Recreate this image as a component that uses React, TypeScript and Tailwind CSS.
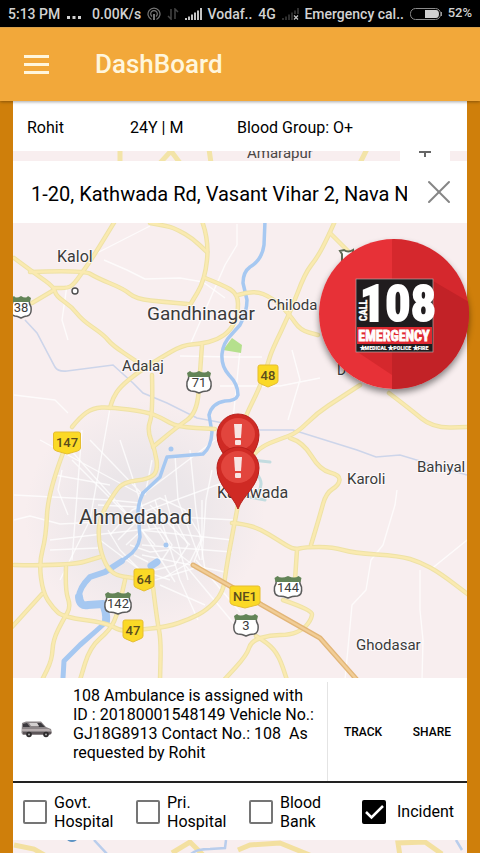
import { X } from 'lucide-react'

/**
 * Ambulance dashboard: patient summary, location map and assignment card.
 */

const FONT = "font-['Roboto','Liberation_Sans',sans-serif]"

const roads = [
  '115,221 95,254 84,270 74,284 68,288 54,288',
  '14,258 37,275 54,287 56,296 72,307 82,320 104,335 112,345 136,361',
  '30,272 84,270 97,278 124,289 136,299 165,302 188,304',
  '54,290 32,303',
  '150,223 168,226 178,230 192,238 207,252',
  '202,221 209,240 205,280 190,305',
  '205,278 223,285 238,294 238,314 231,330 217,340 200,344 183,345 160,358 137,373 120,387 113,398 110,408',
  '202,345 200,373 197,413 177,427 153,447',
  '72,427 80,417 93,408 110,407 147,412 162,418 177,427 215,429',
  '152,375 153,413 147,430 155,450 158,470 150,479 123,482 113,495 100,517 98,537 103,560 113,575 133,578',
  '63,453 48,493 46,537 39,563 43,593 53,608 63,617 107,623 120,631 135,630 167,627 190,619 207,610 223,593 226,570 230,547 238,505',
  '14,565 70,566 100,557',
  '66,567 65,590 71,607 63,620 53,640 52,660 42,680',
  '42,594 12,627',
  '125,580 122,593 118,613 110,630 90,647 80,680',
  '153,587 157,620 161,640 160,680',
  '335,221 328,237 317,258 305,273 290,313 272,350 268,363 260,387 245,417 238,440',
  '330,233 350,253',
  '238,295 253,290 273,298 290,315 300,330 318,335',
  '360,385 340,398 317,413 297,433 280,439 260,447 245,465',
  '389,393 410,409 433,428 470,427',
  '290,438 303,442 320,470 340,475 339,485 326,493 320,515 311,545',
  '232,523 244,524 260,529 278,540 294,550 305,547 333,547 353,553 400,556 420,562 440,573 470,596',
  '297,550 295,580',
  '283,600 312,610 312,618 304,629 290,635 270,635 251,641 247,655 224,680',
  '256,636 268,643 279,656 287,680',
]

const streets = [
  'M97 253L150 226M104 260L127 270L145 279L180 278L203 282L225 298',
  'M14 395L55 400L68 413M180 356L232 357L262 357M110 408L90 520L60 580',
  'M67 285L62 320L68 340M237 224L237 245L225 265L190 345',
  'M397 490L395 505L383 545L371 560L366 590L352 605L345 680',
  'M420 570L420 610L423 640L422 680M467 540L430 570',
  'M240 350L232 430M220 386L280 386L320 378M288 420L300 380L292 350',
  'M40 440L140 494M60 438L155 545M90 440L142 494M120 440L150 530M14 495L110 500L140 503',
  'M14 520L30 516L60 524L98 522M50 540L138 530M50 550L98 548M72 460L132 520M82 430L72 560',
  'M142 495L215 440M140 513L236 478M140 515L235 520M140 530L232 540M142 545L232 552M142 555L225 572',
  'M145 495L152 460M155 500L180 580L198 620M165 495L188 580M175 455L178 500L200 560M190 450L196 510L205 570',
  'M110 535L132 510L160 498L185 510L202 538L190 562L165 577M118 540L136 522L160 512L178 525L188 545L175 565L155 570',
  'M126 545L142 530L160 528L172 545L162 560M100 540L140 570L170 580M108 530L120 550L150 580',
  'M145 510L167 545L193 565M150 505L190 545M142 530L175 582M185 565L235 625M196 560L240 612M155 580L195 568',
  'M202 500L202 540L194 562M212 470L206 500L202 560M55 475L110 485M98 505L138 507',
  'M130 545L150 552L168 550M134 555L148 562M160 585L205 605M62 470L58 490L68 515',
]

const places = [
  { name: 'Kalol', x: 57, y: 262, size: 16 },
  { name: 'Gandhinagar', x: 147, y: 320, size: 19 },
  { name: 'Chiloda', x: 267, y: 310, size: 15 },
  { name: 'Adalaj', x: 122, y: 371, size: 15 },
  { name: 'D', x: 337, y: 375, size: 14 },
  { name: 'Bahiyal', x: 417, y: 472, size: 15 },
  { name: 'Karoli', x: 347, y: 484, size: 15 },
  { name: 'Kathwada', x: 217, y: 498, size: 16 },
  { name: 'Ahmedabad', x: 79, y: 524, size: 21 },
  { name: 'Ghodasar', x: 356, y: 650, size: 15 },
]

const yellowShields = [
  { label: '48', x: 268, y: 375, w: 20 },
  { label: '147', x: 67, y: 442, w: 27 },
  { label: '64', x: 144, y: 579, w: 20 },
  { label: '47', x: 133, y: 630, w: 20 },
  { label: 'NE1', x: 245, y: 596, w: 30 },
]

const whiteShields = [
  { label: '38', x: 21, y: 307, w: 20 },
  { label: '71', x: 199, y: 382, w: 24 },
  { label: '142', x: 118, y: 603, w: 26 },
  { label: '144', x: 288, y: 587, w: 27 },
  { label: '3', x: 246, y: 625, w: 24 },
]

const layers = [
  { id: 'govt', label: 'Govt. Hospital', checked: false },
  { id: 'private', label: 'Pri. Hospital', checked: false },
  { id: 'blood', label: 'Blood Bank', checked: false },
  { id: 'incident', label: 'Incident', checked: true },
]

// Rounds the corners of a polyline by curving through the segment midpoints.
function smooth(points: string) {
  const pts = points.split(' ').map((p) => p.split(',').map(Number))
  let d = `M${pts[0][0]} ${pts[0][1]}`
  for (let i = 1; i < pts.length - 1; i++) {
    const [x, y] = pts[i]
    const [nx, ny] = pts[i + 1]
    d += `Q${x} ${y} ${(x + nx) / 2} ${(y + ny) / 2}`
  }
  const last = pts[pts.length - 1]
  return `${d}L${last[0]} ${last[1]}`
}

function YellowShield({ label, x, y, w }: { label: string; x: number; y: number; w: number }) {
  const h = w / 2
  return (
    <g transform={`translate(${x} ${y})`}>
      <path
        d={`M${-h + 2} -10H${h - 2}Q${h} -10 ${h} -8V6Q${h} 8 ${h - 3} 9L0 12L${-h + 3} 9Q${-h} 8 ${-h} 6V-8Q${-h} -10 ${-h + 2} -10Z`}
        fill="#fbd926"
        stroke="#e5bd30"
      />
      <text y="5" textAnchor="middle" fontSize="13" fontWeight="500" fill="#5a4c1c">
        {label}
      </text>
    </g>
  )
}

function WhiteShield({ label, x, y, w }: { label: string; x: number; y: number; w: number }) {
  const h = w / 2
  return (
    <g transform={`translate(${x} ${y})`}>
      <path
        d={`M${-h + 2} -8H${h - 2}Q${h - 2} -3 ${h} 0Q${h + 1} 8 ${h - 4} 9Q4 9 0 11Q-4 9 ${-h + 4} 9Q${-h - 1} 8 ${-h} 0Q${-h + 2} -3 ${-h + 2} -8Z`}
        fill="#fff"
        stroke="#5c5c5c"
        strokeWidth="1.5"
      />
      <path
        d={`M${-h + 1} -5L${-h} -9L${-h + 3} -11Q${-h / 2} -8 0 -11Q${h / 2} -8 ${h - 3} -11L${h} -9L${h - 1} -5Z`}
        fill="#638457"
      />
      <text y="5" textAnchor="middle" fontSize="13" fill="#3c3c3c">
        {label}
      </text>
    </g>
  )
}

function Pin({ x, y }: { x: number; y: number }) {
  return (
    <g transform={`translate(${x} ${y})`}>
      <path
        d="M0 41C-5 27 -21 18 -21 0A21 21 0 0 1 21 0C21 18 5 27 0 41Z"
        fill="#cf2a24"
        stroke="#b8201c"
      />
      <ellipse cy="-1" rx="17" ry="16" fill="#e2453d" />
      <path d="M-4 -11H4L3 3H-3Z" fill="#f8e4e2" />
      <rect x="-3" y="5" width="6" height="5" rx="1" fill="#f8e4e2" />
    </g>
  )
}

function CityMap() {
  return (
    <svg
      viewBox="13 223 454 455"
      preserveAspectRatio="xMidYMid slice"
      className="h-0 min-h-[360px] w-full flex-1 bg-[#f8eeef]"
      role="img"
      aria-label="Map of Ahmedabad"
    >
      <defs>
        <radialGradient id="urban">
          <stop offset="0.4" stopColor="#ebe6e9" />
          <stop offset="1" stopColor="#ebe6e9" stopOpacity="0" />
        </radialGradient>
      </defs>
      <ellipse cx="145" cy="515" rx="120" ry="115" fill="url(#urban)" />
      <g fill="none" stroke="#fff" strokeWidth="1.4" strokeOpacity="0.75" strokeLinejoin="round">
        {streets.map((d) => (
          <path key={d} d={d} />
        ))}
      </g>
      <path d="M223 350L232 338L242 345L241 353Z" fill="#b5e08d" />

      <path
        d="M25 320L37 333L55 367Q58 372 67 371L113 365L133 383L143 393L167 403L197 418L260 430H293L357 450L376 457L400 455L467 475"
        fill="none"
        stroke="#cdd5ea"
        strokeWidth="1.6"
      />
      <g fill="none" stroke="#a6c8f1" strokeLinejoin="round" strokeLinecap="round">
        <path
          d="M265 221L264 245Q262 260 250 267Q243 272 243 283L247 300Q247 312 240 325L231 335Q223 343 222 354Q221 366 229 375Q238 384 238 395Q236 401 225 401Q212 403 209 415L212 432Q211 448 203 454L167 457Q163 468 160 477L143 493"
          strokeWidth="3.5"
        />
        <path d="M143 493Q138 503 138 513L140 537Q138 550 127 557L108 571" strokeWidth="3.5" />
        <path d="M122 561L105 572L90 577Q79 588 79 597" strokeWidth="6" />
        <path d="M79 597Q80 607 88 605L103 604Q107 613 106 621" strokeWidth="8" />
        <path d="M106 622L96 631L80 645L64 661L63 678" strokeWidth="5" />
        <path d="M151 566L157 562" strokeWidth="7" />
        <path d="M166 545V545M171 449V449" strokeWidth="5" />
        <path d="M243 459L270 462M244 496L265 500M256 473Q265 483 258 492" stroke="#c3dce0" strokeWidth="3" />
      </g>

      <g fill="none" strokeLinejoin="round" strokeLinecap="round">
        {roads.map((points) => (
          <path key={points} d={smooth(points)} stroke="#eee2a6" strokeWidth="4.500" />
        ))}
        {roads.map((points) => (
          <path key={points} d={smooth(points)} stroke="#faeab0" strokeWidth="2.500" />
        ))}
        <path d="M193 565L237 590L262 605L320 638L358 681" stroke="#e2b577" strokeWidth="5" />
        <path d="M193 565L237 590L262 605L320 638L358 681" stroke="#f1cd96" strokeWidth="2.5" />
      </g>
      <circle cx="75" cy="291" r="3" fill="#fff" stroke="#4e4e4e" strokeWidth="1.4" />
      <path d="M342 262V254L340 251L344 250Q348 253 353 250V262" fill="#fff" stroke="#5e6b55" strokeWidth="2" />

      <g fill="#3b3b3b" stroke="#fff" strokeWidth="2" strokeOpacity="0.7" paintOrder="stroke">
        {places.map((p) => (
          <text key={p.name} x={p.x} y={p.y} fontSize={p.size}>
            {p.name}
          </text>
        ))}
      </g>
      {yellowShields.map((s) => (
        <YellowShield key={s.label} {...s} />
      ))}
      {whiteShields.map((s) => (
        <WhiteShield key={s.label} {...s} />
      ))}
      <Pin x={238} y={435} />
      <Pin x={238} y={468} />
    </svg>
  )
}

function EmergencyButton() {
  return (
    <button
      type="button"
      aria-label="Call 108 emergency"
      className="absolute top-4 -right-0.5 size-[150px] rounded-full shadow-[0_4px_6px_rgba(0,0,0,0.45)]"
    >
      <svg viewBox="0 0 150 150" className="block size-full">
        <defs>
          <clipPath id="disc">
            <circle cx="75" cy="75" r="75" />
          </clipPath>
        </defs>
        <g clipPath="url(#disc)">
          <path d="M0 0H73V150H0Z" fill="#e73137" />
          <path d="M73 0H150V150H73Z" fill="#d5282d" />
          <path d="M114 42L150 63V150H73V75Z" fill="#c22227" />
          <path d="M37 112L73 136V112Z" fill="#d5282d" />
        </g>
        <rect x="37" y="40" width="77" height="73" fill="#201c1e" stroke="#b9a5a6" strokeWidth="0.7" />
        <rect x="38" y="88" width="75" height="17" fill="#df2830" />
        <g fill="#fff" stroke="#fff" fontWeight="700" className="font-['Liberation_Sans_Narrow','Roboto_Condensed','Liberation_Sans',sans-serif]">
          <text x="79" y="82" fontSize="50" strokeWidth="2" textAnchor="middle">
            108
          </text>
          <text transform="translate(48 82) rotate(-90)" fontSize="10" strokeWidth="0.4">
            CALL
          </text>
          <text x="75" y="102" fontSize="14" strokeWidth="0.8" textAnchor="middle">
            EMERGENCY
          </text>
          <text x="75" y="111" fontSize="6" strokeWidth="0.2" textAnchor="middle">
            ★MEDICAL ★POLICE ★FIRE
          </text>
        </g>
      </svg>
    </button>
  )
}

function StatusBar() {
  return (
    <div className="flex h-[27px] items-center justify-between bg-black pr-2 pl-2 text-sm font-medium text-[#d2d2d2]">
      <span>5:13 PM</span>
      <svg viewBox="0 0 16 14" className="h-[14px] w-4" fill="#d2d2d2">
        <path d="M1 9h3v3H1zM6.500 9h3v3h-3zM12 9h3v3h-3z" />
      </svg>
      <span className="ml-1">0.00K/s</span>
      <svg viewBox="0 0 14 14" className="size-[14px]" fill="none" stroke="#777" strokeWidth="1.2">
        <path d="M4.500 12.500A6 6 0 1 1 9.500 12.500M5 9.500A3.300 3.300 0 1 1 9 9.500" />
        <path d="M7 7V13" strokeWidth="2" />
      </svg>
      <svg viewBox="0 0 12 12" className="size-3" fill="none" stroke="#444" strokeWidth="1.5">
        <path d="M4 1V11L1 8M8 11V1L11 4" />
      </svg>
      <svg viewBox="0 0 17 12" className="h-3 w-[17px]" fill="#c4c4c4">
        <path d="M0 10h2v2H0zM3 8.500h2V12H3zM6 6.500h2V12H6zM9 4.500h2V12H9zM12 2.500h2V12h-2zM15 0h2v12h-2z" />
      </svg>
      <span>Vodaf..</span>
      <span>4G</span>
      <svg viewBox="0 0 17 12" className="h-3 w-[17px]" fill="#2e2e2e">
        <path d="M0 10h2v2H0zM3 8.500h2V12H3zM6 6.500h2V12H6zM9 4.500h2V12H9zM12 2.500h2V6h-2zM15 0h2v6h-2z" />
        <path d="M12 7.500L16 11.500M16 7.500L12 11.500" stroke="#c4c4c4" strokeWidth="1.200" />
      </svg>
      <span>Emergency cal..</span>
      <svg viewBox="0 0 32 12" className="h-3 w-8">
        <rect x="0.500" y="0.500" width="30" height="11" rx="5" fill="none" stroke="#8a8a8a" />
        <path d="M15 2H26Q29 2 29 6T26 10H15Z" fill="#cfcfcf" />
        <path d="M31.500 4V8" stroke="#999" />
      </svg>
      <span className="text-[13px]">52%</span>
    </div>
  )
}

export default function App() {
  return (
    <div className={`flex min-h-screen flex-col bg-[#cf7f0b] text-black ${FONT}`}>
      <StatusBar />
      <header className="relative flex h-[74px] items-center border-t border-[#d99f4a] bg-[#f2a83a] px-6 text-[#fff6dd] shadow-[0_1px_3px_rgba(0,0,0,0.35)]">
        <button type="button" aria-label="Open menu" className="flex w-[25px] flex-col gap-[5px]">
          <span className="h-[3px] w-full bg-current" />
          <span className="h-[3px] w-full bg-current" />
          <span className="h-[3px] w-full bg-current" />
        </button>
        <h1 className="ml-[46px] text-[26px] font-medium">DashBoard</h1>
      </header>

      <main className="mx-[13px] flex flex-1 flex-col bg-white">
        <section className="flex h-[50px] items-center px-[14px] pt-1 text-base">
          <p className="w-[103px]">Rohit</p>
          <p className="w-[107px]">24Y | M</p>
          <p>Blood Group: O+</p>
        </section>

        <svg viewBox="13 151 454 10" preserveAspectRatio="xMidYMid slice" className="h-[10px] w-full bg-[#f8eeef]" aria-hidden="true">
          <path d="M120 149V163M160 163L171 151L180 163M209 149L211 163M367 149L360 163" fill="none" stroke="#f3e4a8" strokeWidth="5" />
          <text x="247" y="158" fontSize="15" fill="#4a4646">
            Amarapur
          </text>
          <path d="M400 151H450V161H400Z" fill="#fff" />
          <path d="M419 152H431M425 152V157" stroke="#666" strokeWidth="2" />
        </svg>

        <div className="flex h-[62px] items-center pr-2 pl-[18px]">
          <input
            type="text"
            aria-label="Location"
            defaultValue="1-20, Kathwada Rd, Vasant Vihar 2, Nava Naroda"
            className="min-w-0 flex-1 bg-transparent pt-1 text-xl outline-none"
          />
          <button type="button" aria-label="Clear location" className="ml-3 text-[#858585]">
            <X size={40} strokeWidth={1.2} />
          </button>
        </div>

        <div className="relative flex flex-1 flex-col">
          <CityMap />
          <EmergencyButton />
        </div>

        <section className="flex min-h-[105px] border-b-2 border-[#222]">
          <svg viewBox="0 0 32 18" className="mx-2 h-[18px] w-8 shrink-0 self-center" aria-hidden="true">
            <path d="M1 2L5 0.500H20L25 6L30 8L31 12L29 14H2L0.500 12Z" fill="#8b8587" />
            <path d="M2 3L6 2L9 6H2ZM20 2L24 6H18L16 2Z" fill="#3c3a3e" />
            <path d="M8 2H16L18 5H10Z" fill="#d3d0d0" />
            <path d="M1 8H28L30 10H1Z" fill="#b6adae" />
            <path d="M2 11H30V13H2Z" fill="#5c5558" />
            <circle cx="8" cy="13.500" r="2.800" fill="#2d2b2c" />
            <circle cx="25" cy="13.500" r="2.800" fill="#2d2b2c" />
            <circle cx="8" cy="13.500" r="1" fill="#aaa" />
            <circle cx="25" cy="13.500" r="1" fill="#aaa" />
          </svg>
          <p className="flex-1 pt-2 pr-2 pl-3 text-base leading-[19px] whitespace-pre-wrap">
            {'108 Ambulance is assigned with ID : 20180001548149 Vehicle No.: GJ18G8913 Contact No.: 108  As requested by Rohit'}
          </p>
          <div className="mt-1 flex w-[140px] items-center justify-between border-l border-[#e4e4e4] px-4 text-xs font-medium">
            <button type="button">TRACK</button>
            <button type="button">SHARE</button>
          </div>
        </section>

        <section className="grid h-[57px] grid-cols-[1fr_1fr_1fr_105px] items-center pl-[10px] text-base leading-[19px]">
          {layers.map((layer) => (
            <label key={layer.id} htmlFor={layer.id} className="flex items-center gap-[7px] last:gap-[11px]">
              <span className="relative size-6 shrink-0">
                <input
                  id={layer.id}
                  type="checkbox"
                  defaultChecked={layer.checked}
                  className="peer block size-6 appearance-none rounded-xs border-2 border-[#757575] checked:border-black checked:bg-black"
                />
                <svg
                  viewBox="0 0 24 24"
                  className="pointer-events-none absolute inset-0 hidden size-6 peer-checked:block"
                  fill="none"
                  stroke="#fff"
                  strokeWidth="2.500"
                >
                  <path d="M4 12L9.500 17.500L21 6" />
                </svg>
              </span>
              <span className="max-w-[62px]">{layer.label}</span>
            </label>
          ))}
        </section>

        <svg viewBox="13 840 454 13" preserveAspectRatio="xMidYMid slice" className="h-[13px] w-full bg-[#f8eeef]" aria-hidden="true">
          <path d="M14 845L34 849L46 856M172 853L190 842L204 856M238 850L250 845L280 843L312 856M400 856L398 843L425 842L442 854" fill="none" stroke="#f3e0a0" strokeWidth="5" />
          <path d="M94 840L108 855M190 855Q195 849 210 849L225 848L226 840M456 840L462 850" fill="none" stroke="#b9cdec" strokeWidth="2.500" />
          <ellipse cx="72" cy="839" rx="5" ry="3" fill="#5c93c4" />
        </svg>
      </main>
    </div>
  )
}
